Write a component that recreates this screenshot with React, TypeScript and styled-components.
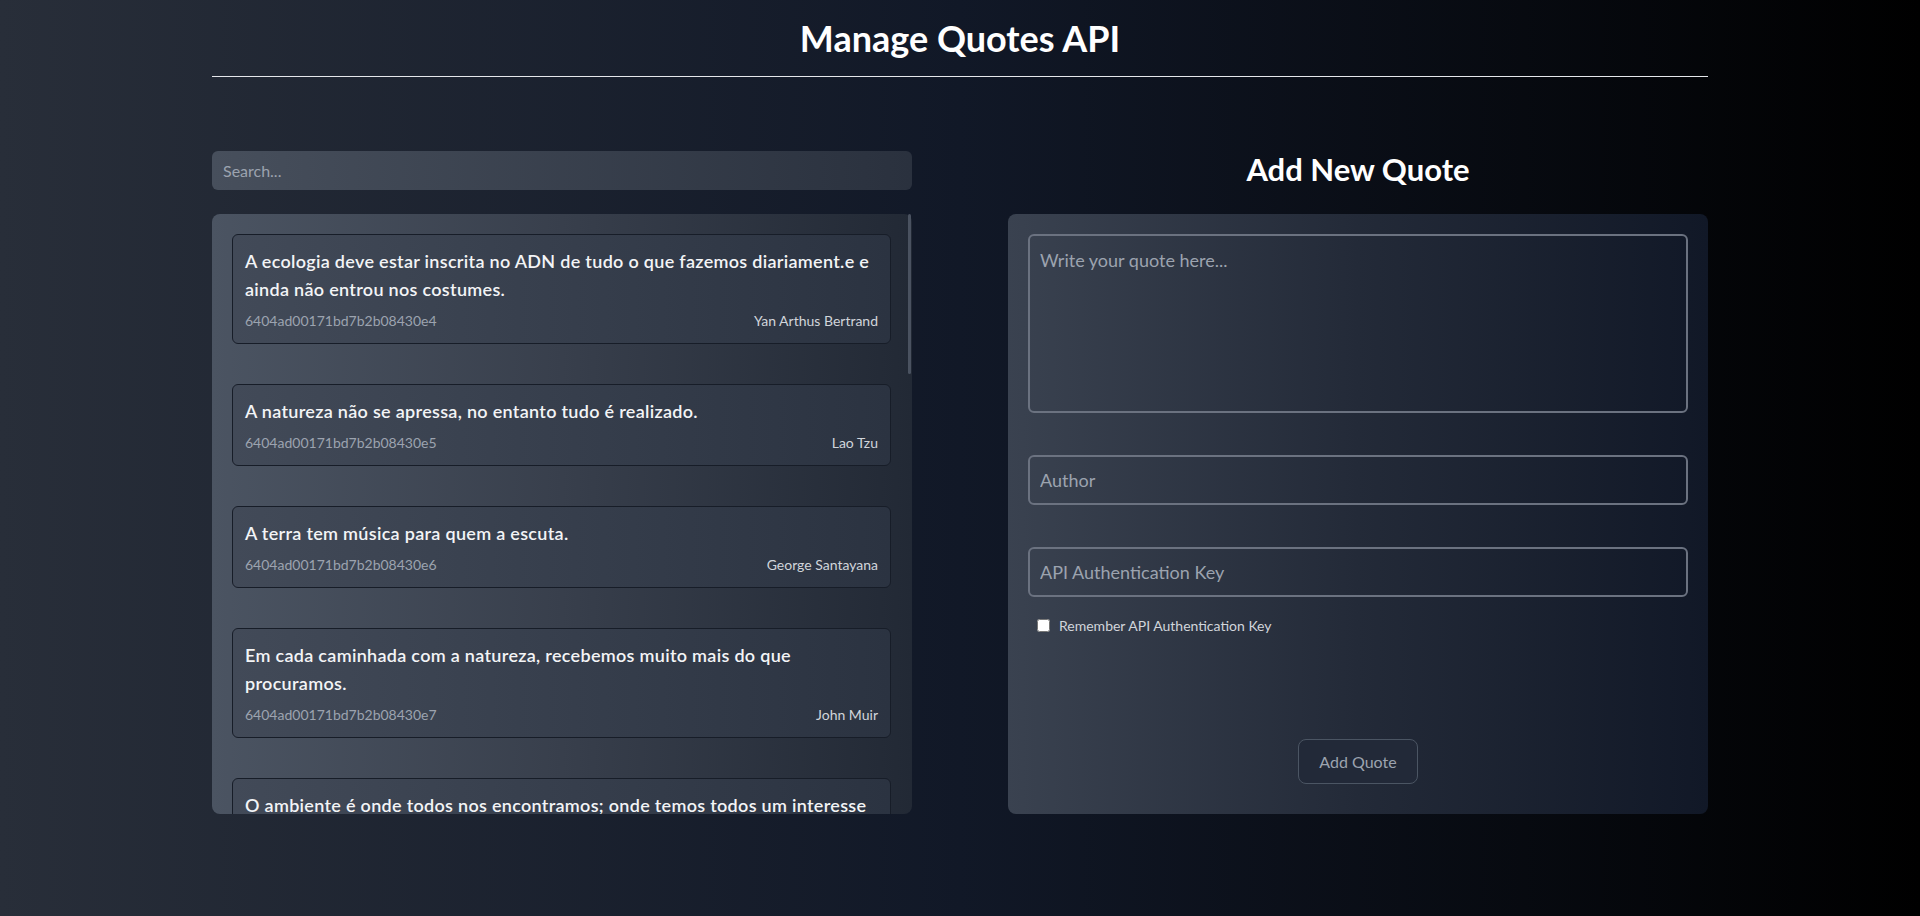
import * as React from "react"
import styled, { createGlobalStyle } from "styled-components"

const GlobalStyle = createGlobalStyle`
    * {
        box-sizing: border-box;
    }
    html, body {
        margin: 0;
        padding: 0;
    }
    body {
        font-family: "Lato", "Noto Sans", "Liberation Sans", sans-serif;
        background: linear-gradient(to right, #282e39 0%, #111827 50%, #000000 100%);
        min-height: 100vh;
        color: #f3f4f6;
    }
`

const Page = styled.div`
    width: 1496px;
    margin: 0 auto;
    min-height: 100vh;
`

const Header = styled.header`
    padding: 18px 0 18px;
    border-bottom: 1px solid #e5e7eb;
    text-align: center;
`

const Title = styled.h1`
    margin: 0;
    font-size: 36px;
    line-height: 40px;
    font-weight: 700;
    color: #ffffff;
`

const Main = styled.main`
    margin-top: 74px;
    display: grid;
    grid-template-columns: 700px 700px;
    column-gap: 96px;
`

const Column = styled.section`
    display: flex;
    flex-direction: column;
`

const SearchInput = styled.input`
    height: 39px;
    margin-bottom: 24px;
    border: none;
    outline: none;
    border-radius: 6px;
    padding: 0 11px;
    font-family: inherit;
    font-size: 16px;
    color: #e5e7eb;
    background: linear-gradient(to right, #474f5c, #2a313e);

    &::placeholder {
        color: #9ca3af;
    }
`

const FormTitle = styled.h2`
    margin: 0 0 24px;
    height: 39px;
    line-height: 37px;
    font-size: 31px;
    font-weight: 700;
    text-align: center;
    color: #ffffff;
`

const Panel = styled.div<{ $tone: "light" | "dark" }>`
    height: 600px;
    border-radius: 8px;
    padding: 20px;
    background: ${p => p.$tone === "light"
        ? "linear-gradient(to right, #4b5462 0%, #383f4c 50%, #222935 100%)"
        : "linear-gradient(to right, #3a4250 0%, #232a38 50%, #111827 100%)"};
`

const ListFrame = styled.div`
    position: relative;
`

const QuoteList = styled(Panel)`
    overflow-y: auto;
    padding-right: 21px;

    &::-webkit-scrollbar {
        width: 0;
    }
`

const ScrollThumb = styled.div`
    position: absolute;
    top: 0;
    right: 1px;
    width: 3px;
    height: 160px;
    border-radius: 2px;
    background: #4a5260;
    pointer-events: none;
`

const QuoteCard = styled.article`
    border: 1px solid #171d28;
    border-radius: 6px;
    padding: 12px;
    margin-bottom: 40px;
    background: linear-gradient(to right, #424a58, #2b3341);
`

const QuoteText = styled.p`
    margin: 0;
    font-size: 18px;
    line-height: 28px;
    font-weight: 600;
    letter-spacing: 0.3px;
    color: #f3f4f6;
`

const QuoteMeta = styled.div`
    margin-top: 8px;
    display: flex;
    justify-content: space-between;
    font-size: 14px;
    line-height: 20px;
`

const QuoteId = styled.span`
    color: #9ca3af;
`

const QuoteAuthor = styled.span`
    color: #d1d5db;
`

const Form = styled(Panel)`
    display: flex;
    flex-direction: column;
`

const fieldBase = `
    width: 100%;
    border: 2px solid #6b7280;
    border-radius: 6px;
    background: transparent;
    outline: none;
    font-family: inherit;
    font-size: 18px;
    color: #f3f4f6;
    padding: 10px;
`

const QuoteArea = styled.textarea`
    ${fieldBase}
    height: 179px;
    line-height: 28px;
    resize: none;

    &::placeholder {
        color: #9ca3af;
    }
`

const TextField = styled.input`
    ${fieldBase}
    height: 50px;
    margin-top: 42px;

    &::placeholder {
        color: #9ca3af;
    }
`

const RememberRow = styled.label`
    margin-top: 18px;
    display: flex;
    align-items: center;
    column-gap: 9px;
    padding-left: 9px;
    height: 20px;
    font-size: 14px;
    color: #d1d5db;

    input {
        width: 13px;
        height: 13px;
        margin: 0;
    }
`

const SubmitButton = styled.button`
    margin: auto auto 10px;
    height: 45px;
    padding: 0 20px;
    border: 1px solid #4b5563;
    border-radius: 8px;
    background: #222938;
    color: #9ca3af;
    font-family: inherit;
    font-size: 16px;
    cursor: pointer;

    &:hover {
        color: #e5e7eb;
    }
`

interface IQuote {
    id: string
    text: string
    author: string
}

const quotes: IQuote[] = [
    { id: "6404ad00171bd7b2b08430e4", text: "A ecologia deve estar inscrita no ADN de tudo o que fazemos diariament.e e ainda não entrou nos costumes.", author: "Yan Arthus Bertrand" },
    { id: "6404ad00171bd7b2b08430e5", text: "A natureza não se apressa, no entanto tudo é realizado.", author: "Lao Tzu" },
    { id: "6404ad00171bd7b2b08430e6", text: "A terra tem música para quem a escuta.", author: "George Santayana" },
    { id: "6404ad00171bd7b2b08430e7", text: "Em cada caminhada com a natureza, recebemos muito mais do que procuramos.", author: "John Muir" },
    { id: "6404ad00171bd7b2b08430e8", text: "O ambiente é onde todos nos encontramos; onde temos todos um interesse mútuo; é a única coisa que todos partilhamos.", author: "Lady Bird Johnson" },
    { id: "6404ad00171bd7b2b08430e9", text: "Olhe profundamente para a natureza e então compreenderá tudo melhor.", author: "Albert Einstein" },
    { id: "6404ad00171bd7b2b08430ea", text: "A natureza nunca nos engana; somos sempre nós que nos enganamos.", author: "Jean-Jacques Rousseau" },
    { id: "6404ad00171bd7b2b08430eb", text: "Só quando a última árvore for derrubada perceberemos que não podemos comer dinheiro.", author: "Provérbio Cree" },
    { id: "6404ad00171bd7b2b08430ec", text: "Não herdamos a terra dos nossos antepassados, pedimo-la emprestada aos nossos filhos.", author: "Antoine de Saint-Exupéry" },
    { id: "6404ad00171bd7b2b08430ed", text: "A maior ameaça ao nosso planeta é acreditar que alguém o vai salvar.", author: "Robert Swan" },
    { id: "6404ad00171bd7b2b08430ee", text: "Estudar a natureza, amar a natureza, ficar perto da natureza. Ela nunca te falhará.", author: "Frank Lloyd Wright" },
    { id: "6404ad00171bd7b2b08430ef", text: "Quem planta árvores sabendo que nunca se sentará à sua sombra começou a compreender o sentido da vida.", author: "Rabindranath Tagore" },
    { id: "6404ad00171bd7b2b08430f0", text: "A Terra proporciona o suficiente para satisfazer as necessidades de cada homem, mas não a ganância de cada homem.", author: "Mahatma Gandhi" },
    { id: "6404ad00171bd7b2b08430f1", text: "Uma nação que destrói o seu solo destrói-se a si mesma.", author: "Franklin D. Roosevelt" },
]

export default function App() {
    return (
        <>
            <GlobalStyle />
            <Page>
                <Header>
                    <Title>Manage Quotes API</Title>
                </Header>
                <Main>
                    <Column>
                        <SearchInput type="text" placeholder="Search..." />
                        <ListFrame>
                            <QuoteList $tone="light">
                                {quotes.map(q => (
                                    <QuoteCard key={q.id}>
                                        <QuoteText>{q.text}</QuoteText>
                                        <QuoteMeta>
                                            <QuoteId>{q.id}</QuoteId>
                                            <QuoteAuthor>{q.author}</QuoteAuthor>
                                        </QuoteMeta>
                                    </QuoteCard>
                                ))}
                            </QuoteList>
                            <ScrollThumb />
                        </ListFrame>
                    </Column>
                    <Column>
                        <FormTitle>Add New Quote</FormTitle>
                        <Form as="form" $tone="dark" onSubmit={(e: React.FormEvent) => e.preventDefault()}>
                            <QuoteArea placeholder="Write your quote here..." />
                            <TextField type="text" placeholder="Author" />
                            <TextField type="password" placeholder="API Authentication Key" />
                            <RememberRow>
                                <input type="checkbox" />
                                Remember API Authentication Key
                            </RememberRow>
                            <SubmitButton type="submit">Add Quote</SubmitButton>
                        </Form>
                    </Column>
                </Main>
            </Page>
        </>
    )
}
